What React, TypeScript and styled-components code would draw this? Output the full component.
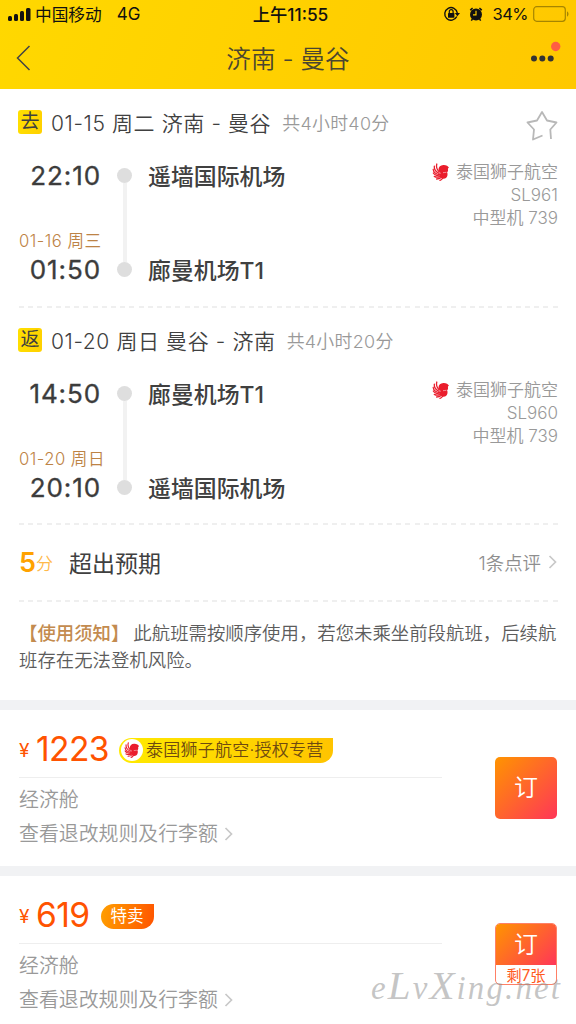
import React from 'react';
import styled, { createGlobalStyle } from 'styled-components';

const Global = createGlobalStyle`
  * { box-sizing: border-box; }
  body { margin: 0; background: #fff; font-family: Inter, "Noto Sans CJK SC", sans-serif; color: #404040; }
`;

const Page = styled.main`
  position: relative;
  width: 576px;
  height: 1024px;
  overflow: hidden;
  background: #fff;
  white-space: nowrap;
`;

const Header = styled.header`
  height: 89px;
  background: linear-gradient(110deg, #ffd800 0%, #ffc800 100%);
`;

const StatusBar = styled.div`
  display: grid;
  grid-template-columns: 1fr auto 1fr;
  align-items: center;
  height: 28px;
  padding: 0 7px 0 8px;
  font-size: 16.7px;
  color: #111;
`;

const StatusGroup = styled.div<{ $end?: boolean }>`
  display: flex;
  align-items: center;
  justify-content: ${p => (p.$end ? 'flex-end' : 'flex-start')};
`;

const Carrier = styled.span`margin: 0 15px 0 4px;`;
const Network = styled.span`font-size: 17px;`;
const Clock = styled.span`margin-top: -2px; font-weight: 500; font-size: 17.3px; padding-left: 4px;`;
const Percent = styled.span`font-size: 16.5px; letter-spacing: -0.5px; margin: 0 5px 0 9px;`;

const NavBar = styled.div`
  display: grid;
  grid-template-columns: 60px 1fr 60px;
  align-items: center;
  height: 60px;
  padding: 0 14px;
`;

const Title = styled.h1`
  margin: -2px 0 0;
  text-align: center;
  font-size: 24.6px;
  font-weight: 350;
  color: #4a4630;
`;

const MoreSlot = styled.div`justify-self: end; display: flex;`;

const Section = styled.section<{ $h: number; $pt?: number }>`
  height: ${p => p.$h}px;
  padding: ${p => p.$pt ?? 0}px 18px 0 19px;
`;

const Dashes = styled.div`
  height: 2px;
  margin: 0 18px 0 19px;
  background: repeating-linear-gradient(90deg, #efefef 0 5px, transparent 5px 9.2px);
`;

const LegHead = styled.div<{ $h: number }>`
  display: flex;
  align-items: center;
  height: ${p => p.$h}px;
`;

const LegBadge = styled.span`
  display: flex;
  align-items: center;
  justify-content: center;
  width: 24px;
  height: 24px;
  margin: -4px 9px 0 -1px;
  border-radius: 3px;
  background: linear-gradient(100deg, #ffe000, #ffd000);
  font-size: 19px;
  font-weight: 400;
  line-height: 24px;
`;

const LegTitle = styled.span`
  margin-top: -4px;
  font-size: 21px;
  font-weight: 350;
  letter-spacing: 0.6px;
`;

const Duration = styled.span`
  margin: -4px 0 0 11px;
  font-size: 17.9px;
  font-weight: 350;
  letter-spacing: 0.3px;
  color: #999;
`;

const Star = styled.svg`margin: 4px 0 0 auto;`;

const LegBody = styled.div`
  display: grid;
  grid-template-columns: 82px 48px 1fr auto;
  height: 130px;
  margin-top: 20px;
`;

const Times = styled.div`
  display: flex;
  flex-direction: column;
  align-items: flex-end;
`;

const Time = styled.span`
  height: 34px;
  font-size: 26px;
  font-weight: 400;
  line-height: 34px;
  letter-spacing: 0.9px;
  color: #3c3c3c;
  -webkit-text-stroke: 0.35px #3c3c3c;
`;

const NextDay = styled.span`
  align-self: flex-start;
  height: 24px;
  margin-top: 36px;
  font-size: 16.6px;
  font-weight: 350;
  line-height: 24px;
  letter-spacing: 0.5px;
  color: #bd8345;
`;

const Rail = styled.div`
  display: flex;
  flex-direction: column;
  align-items: center;
  padding: 9px 0 0 0;
  width: 47px;
`;
const Dot = styled.i`width: 15px; height: 15px; border-radius: 50%; background: #dedede;`;
const Stem = styled.i`width: 4px; height: 79px; background: #f2f2f2;`;

const Airports = styled.div`
  display: flex;
  flex-direction: column;
  gap: 60px;
  padding-top: 1px;
  margin-left: -1px;
  font-size: 22.9px;
  font-weight: 500;
  line-height: 34px;
  color: #404040;
`;

const Carriage = styled.div`
  display: flex;
  flex-direction: column;
  align-items: flex-end;
  padding-top: 2px;
  font-size: 17px;
  font-weight: 350;
  line-height: 22.8px;
  color: #999;
`;
const Airline = styled.span`display: flex; align-items: center; gap: 6px;`;

const RatingRow = styled.div`
  display: flex;
  align-items: center;
  height: 74px;
`;
const Score = styled.span`font-size: 27px; font-weight: 600; color: #ffa200;`;
const ScoreUnit = styled.span`font-size: 17px; color: #ffb94a; margin: 1px 16px 0 0; font-weight: 350;`;
const Verdict = styled.span`margin-top: -1px; font-size: 23px; font-weight: 400;`;
const Reviews = styled.span`margin: -1px 7px 0 auto; font-size: 18.4px; font-weight: 350; color: #8e8e8e;`;

const Notice = styled.p`
  margin: 0;
  font-size: 18.4px;
  font-weight: 350;
  line-height: 26.5px;
  color: #5c5c5c;
`;
const NoticeLabel = styled.b`font-weight: 500; color: #c38b4f; margin-right: 4px;`;

const Gap = styled.div`height: 10px; background: #f1f2f4;`;

const Fare = styled.section<{ $h: number }>`
  display: flex;
  justify-content: space-between;
  height: ${p => p.$h}px;
  padding: 0 19px;
`;
const FareInfo = styled.div`width: 423px;`;
const PriceLine = styled.div`
  display: flex;
  align-items: center;
  height: 68px;
  padding-top: 13px;
  border-bottom: 1px solid #eee;
  color: #ff5300;
`;
const Yen = styled.span`width: 17px; font-size: 19px; margin-top: 1px;`;
const Price = styled.span`margin-top: -3px; font-size: 33.6px; letter-spacing: -0.6px;`;

const BrandTag = styled.span`
  display: flex;
  align-items: center;
  height: 25px;
  margin-left: 10px;
  padding: 0 9px 0 2px;
  border-radius: 13px 0 13px 13px;
  background: linear-gradient(90deg, #ffea00, #ffc400);
  font-size: 17px;
  font-weight: 350;
  letter-spacing: 0.25px;
  line-height: 25px;
  color: #6e4a10;
`;
const Disc = styled.span`
  display: flex;
  align-items: center;
  justify-content: center;
  width: 22px;
  height: 22px;
  margin-right: 3px;
  border-radius: 50%;
  background: #fff;
`;
const SaleTag = styled.span`
  width: 53px;
  height: 25px;
  margin-left: 11px;
  border-radius: 13px 0 13px 13px;
  background: linear-gradient(100deg, #ffa000, #ff5400);
  text-align: center;
  font-size: 16.5px;
  line-height: 25px;
  color: #fff;
`;
const FareLine = styled.div<{ $mt: number }>`
  display: flex;
  align-items: center;
  gap: 6px;
  height: 30px;
  margin-top: ${p => p.$mt}px;
  font-size: 19.9px;
  line-height: 30px;
  font-weight: 350;
  color: #999;
`;

const BookButton = styled.button<{ $split?: boolean }>`
  display: flex;
  flex-direction: column;
  width: 62px;
  height: 62px;
  margin: 47px 0 0;
  padding: 0;
  overflow: hidden;
  border: ${p => (p.$split ? '1px solid #ff8066' : '0')};
  border-radius: 5px;
  background: #fff;
  font-family: inherit;
`;
const BookFace = styled.span`
  flex: 1;
  display: flex;
  align-items: center;
  justify-content: center;
  width: 100%;
  background: linear-gradient(135deg, #ff9400, #ff3658);
  font-size: 24px;
  font-weight: 350;
  line-height: 24px;
  color: #fff;
`;
const SeatsLeft = styled.span`
  width: 100%;
  height: 19px;
  font-size: 15.2px;
  line-height: 21px;
  text-align: center;
  color: #ff5a1e;
`;

const Watermark = styled.div`
  position: absolute;
  left: 371px;
  top: 965px;
  font: italic 33px/44px "Liberation Serif", serif;
  letter-spacing: 2.1px;
  color: rgba(140, 140, 140, 0.5);
`;
const Cap = styled.span`font-size: 41px; line-height: 1;`;

const Lion = ({ size }: { size: number }) => (
  <svg width={size} height={size} viewBox="0 0 18 18">
    <g fill="none" stroke="#ea1d2c" strokeWidth="1.3" strokeLinecap="round">
      <path d="M4.800 1C4 3.500 4.500 6 7.200 9" />
      <path d="M2.300 3.200C2 6 3.500 8.500 7.200 10.500" />
      <path d="M1.200 6.500C1.500 9 3.800 11 7.500 11.700" />
      <path d="M1.300 10C2.500 12 5 12.900 8 12.800" />
      <path d="M2.300 13.400C4 14.400 6.200 14.400 8.500 13.700" />
      <path d="M4.600 16C6.300 16 7.900 15.500 9.300 14.500" />
      <path d="M8 17.300C9.200 17 10 16.300 10.600 15.200" />
    </g>
    <path d="M6.500 6.500C6.500 4 8.500 2.100 11.300 2C13.800 1.800 16.300 3 17 5C16 5 15.700 5.600 16 6.600C16.200 8 15.800 8.800 15.100 9.300C16 11 15.600 13.600 14 14.900C12 16.200 9.500 15.700 8.300 14C7.300 12 7.800 10.800 8.600 9.900C7.300 9.200 6.500 8.200 6.500 6.500Z" fill="#ea1d2c" />
    <path d="M11 9.700C12 9.300 13 9.700 14.400 9.300" fill="none" stroke="#fff" strokeWidth="0.5" />
  </svg>
);

const Chevron = () => (
  <svg width="10" height="18" viewBox="0 0 10 18">
    <path d="M1.500 3L7.500 9L1.500 15" fill="none" stroke="#c8c8c8" strokeWidth="1.7" />
  </svg>
);

type LegProps = {
  badge: string; title: string; duration: string; depart: string; from: string;
  nextDay: string; arrive: string; to: string; flight: string; star?: boolean; headHeight: number;
};

const Leg = (p: LegProps) => (
  <>
    <LegHead $h={p.headHeight}>
      <LegBadge>{p.badge}</LegBadge>
      <LegTitle>{p.title}</LegTitle>
      <Duration>{p.duration}</Duration>
      {p.star && (
        <Star width="32" height="32" viewBox="0 0 32 32">
          <path d="M25 29L24.300 19.500L30.500 12.500L21 10.500L16 2L11 10.500L1.500 12.500L8 19.500L7 29.500L16.500 25.500" fill="none" stroke="#b8b8b8" strokeWidth="1.8" strokeLinejoin="round" />
        </Star>
      )}
    </LegHead>
    <LegBody>
      <Times>
        <Time>{p.depart}</Time>
        <NextDay>{p.nextDay}</NextDay>
        <Time>{p.arrive}</Time>
      </Times>
      <Rail><Dot /><Stem /><Dot /></Rail>
      <Airports><span>{p.from}</span><span>{p.to}</span></Airports>
      <Carriage>
        <Airline><Lion size={18} />泰国狮子航空</Airline>
        <span>{p.flight}</span>
        <span>中型机 739</span>
      </Carriage>
    </LegBody>
  </>
);

export default function App() {
  return (
    <Page>
      <Global />
      <Header>
        <StatusBar>
          <StatusGroup>
            <svg width="23" height="15" viewBox="0 0 23 15" fill="#111">
              <rect x="0" y="9" width="4" height="5" rx="1.500" />
              <rect x="6" y="7" width="4" height="7" rx="1.500" />
              <rect x="12" y="4" width="4" height="10" rx="1.500" />
              <rect x="18" y="1" width="4.500" height="13" rx="1.500" />
            </svg>
            <Carrier>中国移动</Carrier>
            <Network>4G</Network>
          </StatusGroup>
          <Clock>上午11:55</Clock>
          <StatusGroup $end>
            <svg width="42" height="18" viewBox="0 0 42 18">
              <path d="M15.800 11.500A6.300 6.300 0 1 1 16.300 8" fill="none" stroke="#111" strokeWidth="1.400" />
              <path d="M13.800 8H19L16.400 11.300Z" fill="#111" />
              <rect x="7" y="8" width="6.400" height="4.800" rx="0.600" fill="#111" />
              <path d="M8.300 8V6.500A1.900 1.900 0 0 1 12.100 6.500V8" fill="none" stroke="#111" strokeWidth="1.200" />
              <circle cx="35" cy="9.500" r="6" fill="#111" />
              <path d="M29.200 5.200L31.600 3.200M40.800 5.200L38.400 3.200M31.500 14L30.300 15.600M38.500 14L39.700 15.600" stroke="#111" strokeWidth="1.500" />
              <path d="M35 5.800V9.800H32" fill="none" stroke="#ffcd00" strokeWidth="1.200" />
            </svg>
            <Percent>34%</Percent>
            <svg width="36" height="16" viewBox="0 0 36 16">
              <rect x="0.700" y="0.700" width="31.600" height="14.600" rx="3" fill="none" stroke="#a68500" strokeWidth="1.200" />
              <path d="M34 5.500C36 6 36 10 34 10.500Z" fill="#a68500" />
            </svg>
          </StatusGroup>
        </StatusBar>
        <NavBar>
          <svg width="18" height="28" viewBox="0 0 18 28">
            <path d="M15.500 2L3.500 14L15.500 26" fill="none" stroke="#444" strokeWidth="1.500" />
          </svg>
          <Title>济南 - 曼谷</Title>
          <MoreSlot>
            <svg width="32" height="34" viewBox="0 0 32 34">
              <circle cx="4" cy="17.500" r="3" fill="#333" />
              <circle cx="12.300" cy="17.500" r="3" fill="#333" />
              <circle cx="20.700" cy="17.500" r="3" fill="#333" />
              <circle cx="25.700" cy="5.500" r="4.700" fill="#ff5d43" />
            </svg>
          </MoreSlot>
        </NavBar>
      </Header>

      <Section $h={217} $pt={20}>
        <Leg badge="去" title="01-15 周二 济南 - 曼谷" duration="共4小时40分" depart="22:10" from="遥墙国际机场"
          nextDay="01-16 周三" arrive="01:50" to="廊曼机场T1" flight="SL961" star headHeight={30} />
      </Section>
      <Dashes />
      <Section $h={215} $pt={18}>
        <Leg badge="返" title="01-20 周日 曼谷 - 济南" duration="共4小时20分" depart="14:50" from="廊曼机场T1"
          nextDay="01-20 周日" arrive="20:10" to="遥墙国际机场" flight="SL960" headHeight={31} />
      </Section>
      <Dashes />
      <Section $h={75}>
        <RatingRow>
          <Score>5</Score><ScoreUnit>分</ScoreUnit>
          <Verdict>超出预期</Verdict>
          <Reviews>1条点评</Reviews>
          <Chevron />
        </RatingRow>
      </Section>
      <Dashes />
      <Section $h={98} $pt={18}>
        <Notice>
          <NoticeLabel>【使用须知】</NoticeLabel>此航班需按顺序使用，若您未乘坐前段航班，后续航<br />班存在无法登机风险。
        </Notice>
      </Section>
      <Gap />
      <Fare $h={156}>
        <FareInfo>
          <PriceLine>
            <Yen>¥</Yen><Price>1223</Price>
            <BrandTag><Disc><Lion size={16} /></Disc>泰国狮子航空·授权专营</BrandTag>
          </PriceLine>
          <FareLine $mt={7}>经济舱</FareLine>
          <FareLine $mt={4}>查看退改规则及行李额<Chevron /></FareLine>
        </FareInfo>
        <BookButton><BookFace>订</BookFace></BookButton>
      </Fare>
      <Gap />
      <Fare $h={148}>
        <FareInfo>
          <PriceLine>
            <Yen>¥</Yen><Price>619</Price>
            <SaleTag>特卖</SaleTag>
          </PriceLine>
          <FareLine $mt={7}>经济舱</FareLine>
          <FareLine $mt={4}>查看退改规则及行李额<Chevron /></FareLine>
        </FareInfo>
        <BookButton $split><BookFace>订</BookFace><SeatsLeft>剩7张</SeatsLeft></BookButton>
      </Fare>
      <Watermark>e<Cap>L</Cap>v<Cap>X</Cap>ing.net</Watermark>
    </Page>
  );
}
